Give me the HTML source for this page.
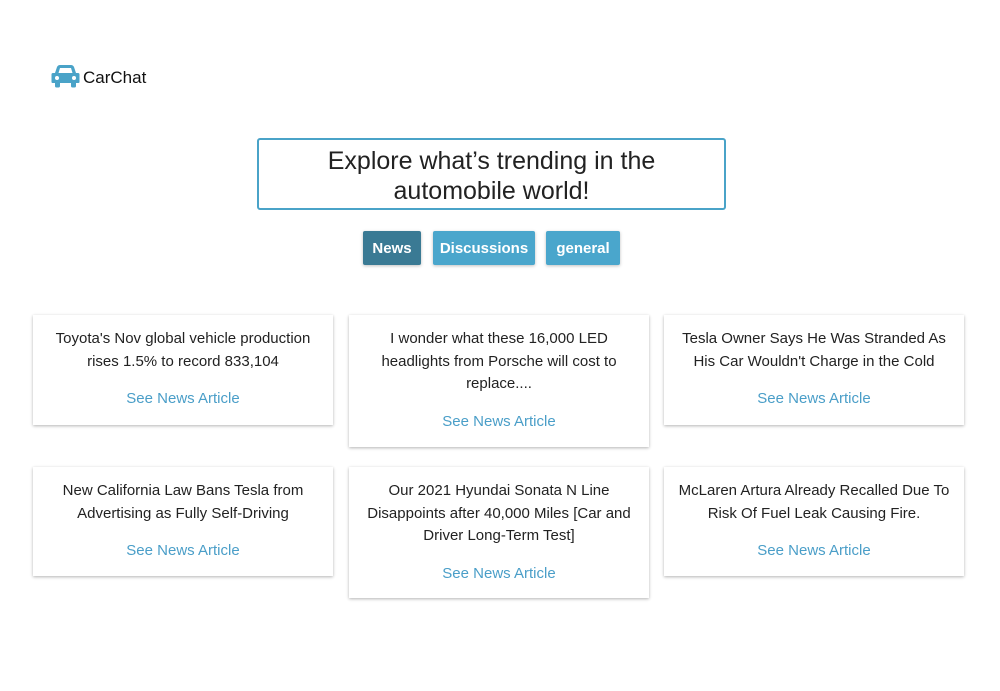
<!DOCTYPE html>
<html><head><style>
body{margin:0;width:1000px;height:691px;background:#fff;font-family:"Liberation Sans",sans-serif;position:relative;overflow:hidden;color:#222}
.logo{position:absolute;left:51px;top:64px;display:flex;align-items:center}
.logo span{font-size:17px;margin-left:3px;color:#111;position:relative;top:2px}
.title{position:absolute;left:257px;top:138px;width:465px;border:2px solid #4aa3c8;border-radius:3px;text-align:center;font-size:25px;line-height:30px;padding-top:6px;height:62px}
.btn{position:absolute;top:231px;height:34px;line-height:36px;color:#fff;font-weight:bold;font-size:15px;text-align:center;border-radius:2px;background:#4aa6cc;box-shadow:0 1px 3px rgba(0,0,0,.25)}
.card{position:absolute;width:300px;box-shadow:0 1px 3px rgba(0,0,0,.3);text-align:center;font-size:15px;line-height:22.5px;box-sizing:border-box;padding:13px 12px 0}
.card a{display:block;color:#4a9ec8;margin-top:15px;text-decoration:none}
</style></head><body>
<div class="logo"><svg width="29" height="24" viewBox="0 0 29 24"><path d="M6 3 Q7 1 9 1 H20 Q22 1 23 3 L25 9 H27 Q28.5 9 28.5 10.5 V18 Q28.5 19 27 19 H25 V22 Q25 23.5 23.5 23.5 H21.5 Q20 23.5 20 22 V19 H9 V22 Q9 23.5 7.5 23.5 H5.5 Q4 23.5 4 22 V19 H2 Q0.5 19 0.5 18 V10.5 Q0.5 9 2 9 H4 Z" fill="#4aa3c8"/><path d="M7.5 9 L9 4 H20 L21.5 9 Z" fill="#fff"/><circle cx="6" cy="14" r="2" fill="#fff"/><circle cx="23" cy="14" r="2" fill="#fff"/></svg><span>CarChat</span></div>
<div class="title">Explore what’s trending in the<br>automobile world!</div>
<div class="btn" style="left:363px;width:58px;background:#3a7a94">News</div>
<div class="btn" style="left:433px;width:102px">Discussions</div>
<div class="btn" style="left:546px;width:74px">general</div>
<div class="card" style="left:33px;top:315px;height:110px">Toyota's Nov global vehicle production rises 1.5% to record 833,104<a>See News Article</a></div>
<div class="card" style="left:349px;top:315px;height:132px">I wonder what these 16,000 LED headlights from Porsche will cost to replace....<a>See News Article</a></div>
<div class="card" style="left:664px;top:315px;height:110px">Tesla Owner Says He Was Stranded As His Car Wouldn't Charge in the Cold<a>See News Article</a></div>
<div class="card" style="left:33px;top:467px;height:109px">New California Law Bans Tesla from Advertising as Fully Self-Driving<a>See News Article</a></div>
<div class="card" style="left:349px;top:467px;height:131px">Our 2021 Hyundai Sonata N Line Disappoints after 40,000 Miles [Car and Driver Long-Term Test]<a>See News Article</a></div>
<div class="card" style="left:664px;top:467px;height:109px">McLaren Artura Already Recalled Due To Risk Of Fuel Leak Causing Fire.<a>See News Article</a></div>
</body></html>
